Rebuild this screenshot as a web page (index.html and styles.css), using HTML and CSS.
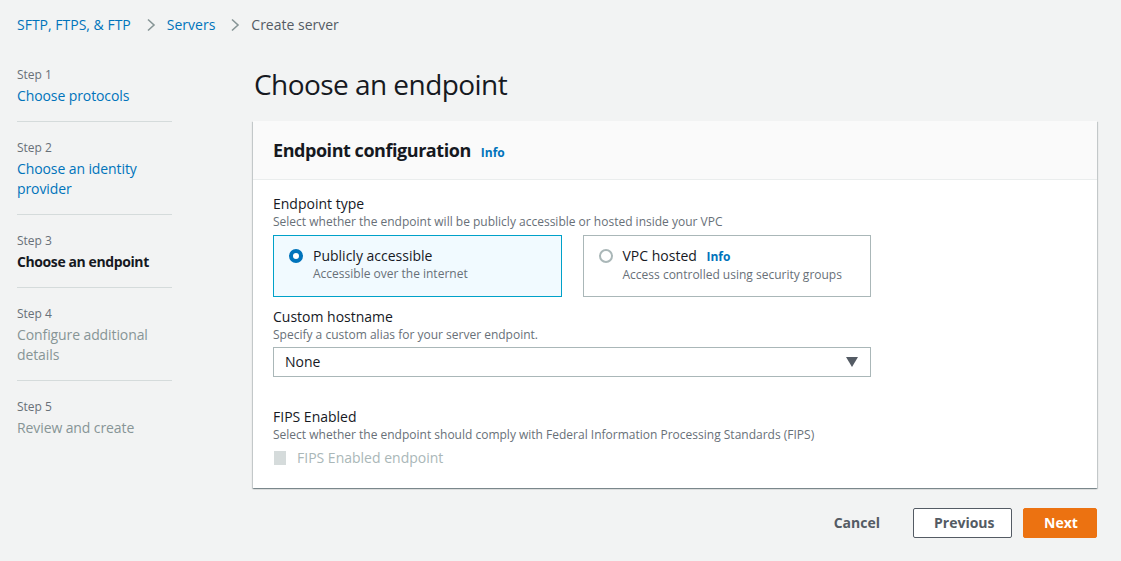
FILE: index.html
```html
<!DOCTYPE html>
<html lang="en">
<head>
<meta charset="utf-8">
<title>Create server</title>
<link rel="stylesheet" href="styles.css">
</head>
<body>
<nav class="breadcrumbs">
  <a class="crumb-link" href="#">SFTP, FTPS, &amp; FTP</a>
  <span class="crumb-sep"><svg width="10" height="14" viewBox="0 0 10 14"><path d="M2 1.5 L8 7 L2 12.5" fill="none" stroke="#879596" stroke-width="1.6"/></svg></span>
  <a class="crumb-link" href="#">Servers</a>
  <span class="crumb-sep"><svg width="10" height="14" viewBox="0 0 10 14"><path d="M2 1.5 L8 7 L2 12.5" fill="none" stroke="#879596" stroke-width="1.6"/></svg></span>
  <span class="crumb-current">Create server</span>
</nav>
<div class="layout">
  <aside class="steps">
    <div class="step">
      <div class="step-num">Step 1</div>
      <a class="step-title link" href="#">Choose protocols</a>
    </div>
    <div class="step">
      <div class="step-num">Step 2</div>
      <a class="step-title link" href="#">Choose an identity provider</a>
    </div>
    <div class="step">
      <div class="step-num">Step 3</div>
      <div class="step-title current">Choose an endpoint</div>
    </div>
    <div class="step">
      <div class="step-num">Step 4</div>
      <div class="step-title disabled">Configure additional details</div>
    </div>
    <div class="step last">
      <div class="step-num">Step 5</div>
      <div class="step-title disabled">Review and create</div>
    </div>
  </aside>
  <main class="main">
    <h1 class="page-title">Choose an endpoint</h1>
    <section class="panel">
      <header class="panel-header">
        <h2 class="panel-title">Endpoint configuration</h2>
        <a class="info" href="#">Info</a>
      </header>
      <div class="panel-body">
        <div class="field">
          <div class="label">Endpoint type</div>
          <div class="desc">Select whether the endpoint will be publicly accessible or hosted inside your VPC</div>
          <div class="tiles">
            <label class="tile selected">
              <span class="radio checked"></span>
              <span class="tile-text">
                <span class="tile-title">Publicly accessible</span>
                <span class="tile-desc">Accessible over the internet</span>
              </span>
            </label>
            <label class="tile">
              <span class="radio"></span>
              <span class="tile-text">
                <span class="tile-title">VPC hosted <a class="info" href="#">Info</a></span>
                <span class="tile-desc">Access controlled using security groups</span>
              </span>
            </label>
          </div>
        </div>
        <div class="field">
          <div class="label">Custom hostname</div>
          <div class="desc tight">Specify a custom alias for your server endpoint.</div>
          <div class="select">
            <span>None</span>
            <svg width="12" height="10" viewBox="0 0 12 10"><path d="M0 0 H12 L6 10 Z" fill="#545b64"/></svg>
          </div>
        </div>
        <div class="field fips">
          <div class="label">FIPS Enabled</div>
          <div class="desc">Select whether the endpoint should comply with Federal Information Processing Standards (FIPS)</div>
          <div class="checkbox-row">
            <span class="checkbox"></span>
            <span class="checkbox-label">FIPS Enabled endpoint</span>
          </div>
        </div>
      </div>
    </section>
    <div class="actions">
      <button class="btn btn-link">Cancel</button>
      <button class="btn btn-normal">Previous</button>
      <button class="btn btn-primary">Next</button>
    </div>
  </main>
</div>
</body>
</html>
```
FILE: styles.css
```css
* { box-sizing: border-box; }
body {
  margin: 0;
  background: #f2f3f3;
  font-family: "Open Sans", "Noto Sans", sans-serif;
  font-size: 14px;
  line-height: 20px;
  color: #16191f;
}
a { text-decoration: none; }
.breadcrumbs {
  display: flex;
  align-items: center;
  padding: 1px 17px 0;
  height: 49px;
}
.crumb-link { color: #0073bb; }
.crumb-sep { display: inline-flex; margin: 0 11px 0 15px; }
.crumb-current { color: #545b64; }
.layout {
  display: flex;
  padding: 0 24px 0 17px;
}
.steps {
  width: 155px;
  flex: none;
  margin-right: 81px;
}
.step {
  padding: 18px 0 15px;
  border-bottom: 1px solid #d5dbdb;
}
.step.last { border-bottom: none; }
.step-num {
  font-size: 12px;
  line-height: 16px;
  color: #687078;
  margin-bottom: 3px;
}
.step-title { display: block; letter-spacing: -0.1px; }
.step-title.link { color: #0073bb; }
.step-title.current { font-weight: 700; color: #16191f; letter-spacing: -0.4px; }
.step-title.disabled { color: #879596; }
.main { flex: 1; }
.page-title {
  margin: 17px 0 19px 1px;
  font-size: 28px;
  line-height: 36px;
  font-weight: 400;
  letter-spacing: -0.55px;
}
.panel {
  background: #fff;
  box-shadow: 0 1px 1px 0 rgba(0,28,36,.3), 1px 1px 1px 0 rgba(0,28,36,.15), -1px 1px 1px 0 rgba(0,28,36,.15);
}
.panel-header {
  display: flex;
  align-items: baseline;
  background: #fafafa;
  border-bottom: 1px solid #eaeded;
  padding: 17px 20px 16px;
}
.panel-title {
  margin: 0 10px 0 0;
  font-size: 18px;
  line-height: 24px;
  font-weight: 700;
  letter-spacing: -0.45px;
}
.info {
  color: #0073bb;
  font-size: 12px;
  font-weight: 700;
}
.panel-body { padding: 14px 20px 20px; }
.field { width: 598px; margin-bottom: 10px; }
.field.fips { margin-top: 30px; margin-bottom: 0; }
.label { line-height: 20px; }
.desc {
  font-size: 12px;
  line-height: 16px;
  color: #687078;
  margin-bottom: 5px;
}
.desc.tight { margin-bottom: 4px; }
.tiles {
  display: grid;
  grid-template-columns: 1fr 1fr;
  gap: 21px;
}
.tile {
  display: flex;
  align-items: flex-start;
  border: 1px solid #aab7b8;
  padding: 10px 14px 13px 15px;
  min-height: 62px;
}
.tile.selected {
  border-color: #00a1c9;
  background: #f1faff;
}
.radio {
  flex: none;
  width: 14px;
  height: 14px;
  border-radius: 50%;
  border: 2px solid #aab7b8;
  margin: 3px 10px 0 0;
  background: #fff;
}
.radio.checked {
  border: 4px solid #0073bb;
}
.tile-text { display: flex; flex-direction: column; }
.tile-title { line-height: 20px; }
.tile-title .info { margin-left: 6px; }
.tile-desc {
  font-size: 12px;
  line-height: 16px;
  color: #687078;
}
.select {
  display: flex;
  align-items: center;
  justify-content: space-between;
  height: 30px;
  border: 1px solid #aab7b8;
  padding: 0 12px 0 11px;
  background: #fff;
}
.checkbox-row {
  display: flex;
  align-items: center;
  margin-top: 3px;
}
.checkbox {
  width: 12px;
  height: 14px;
  background: #d5dbdb;
  margin: 0 11px 0 1px;
}
.checkbox-label { color: #aab7b8; }
.actions {
  display: flex;
  justify-content: flex-end;
  align-items: center;
  margin-top: 20px;
}
.btn {
  font-family: inherit;
  font-size: 14px;
  font-weight: 700;
  line-height: 20px;
  border-radius: 2px;
  cursor: pointer;
}
.btn-link {
  background: none;
  border: 1px solid transparent;
  color: #545b64;
  padding: 4px 20px;
  margin-right: 12px;
}
.btn-normal {
  background: #fff;
  border: 1px solid #545b64;
  color: #545b64;
  padding: 4px 20px;
  width: 99px;
  margin-right: 11px;
}
.btn-primary {
  background: #ec7211;
  border: 1px solid #ec7211;
  color: #fff;
  padding: 4px 20px;
  width: 74px;
}
```
